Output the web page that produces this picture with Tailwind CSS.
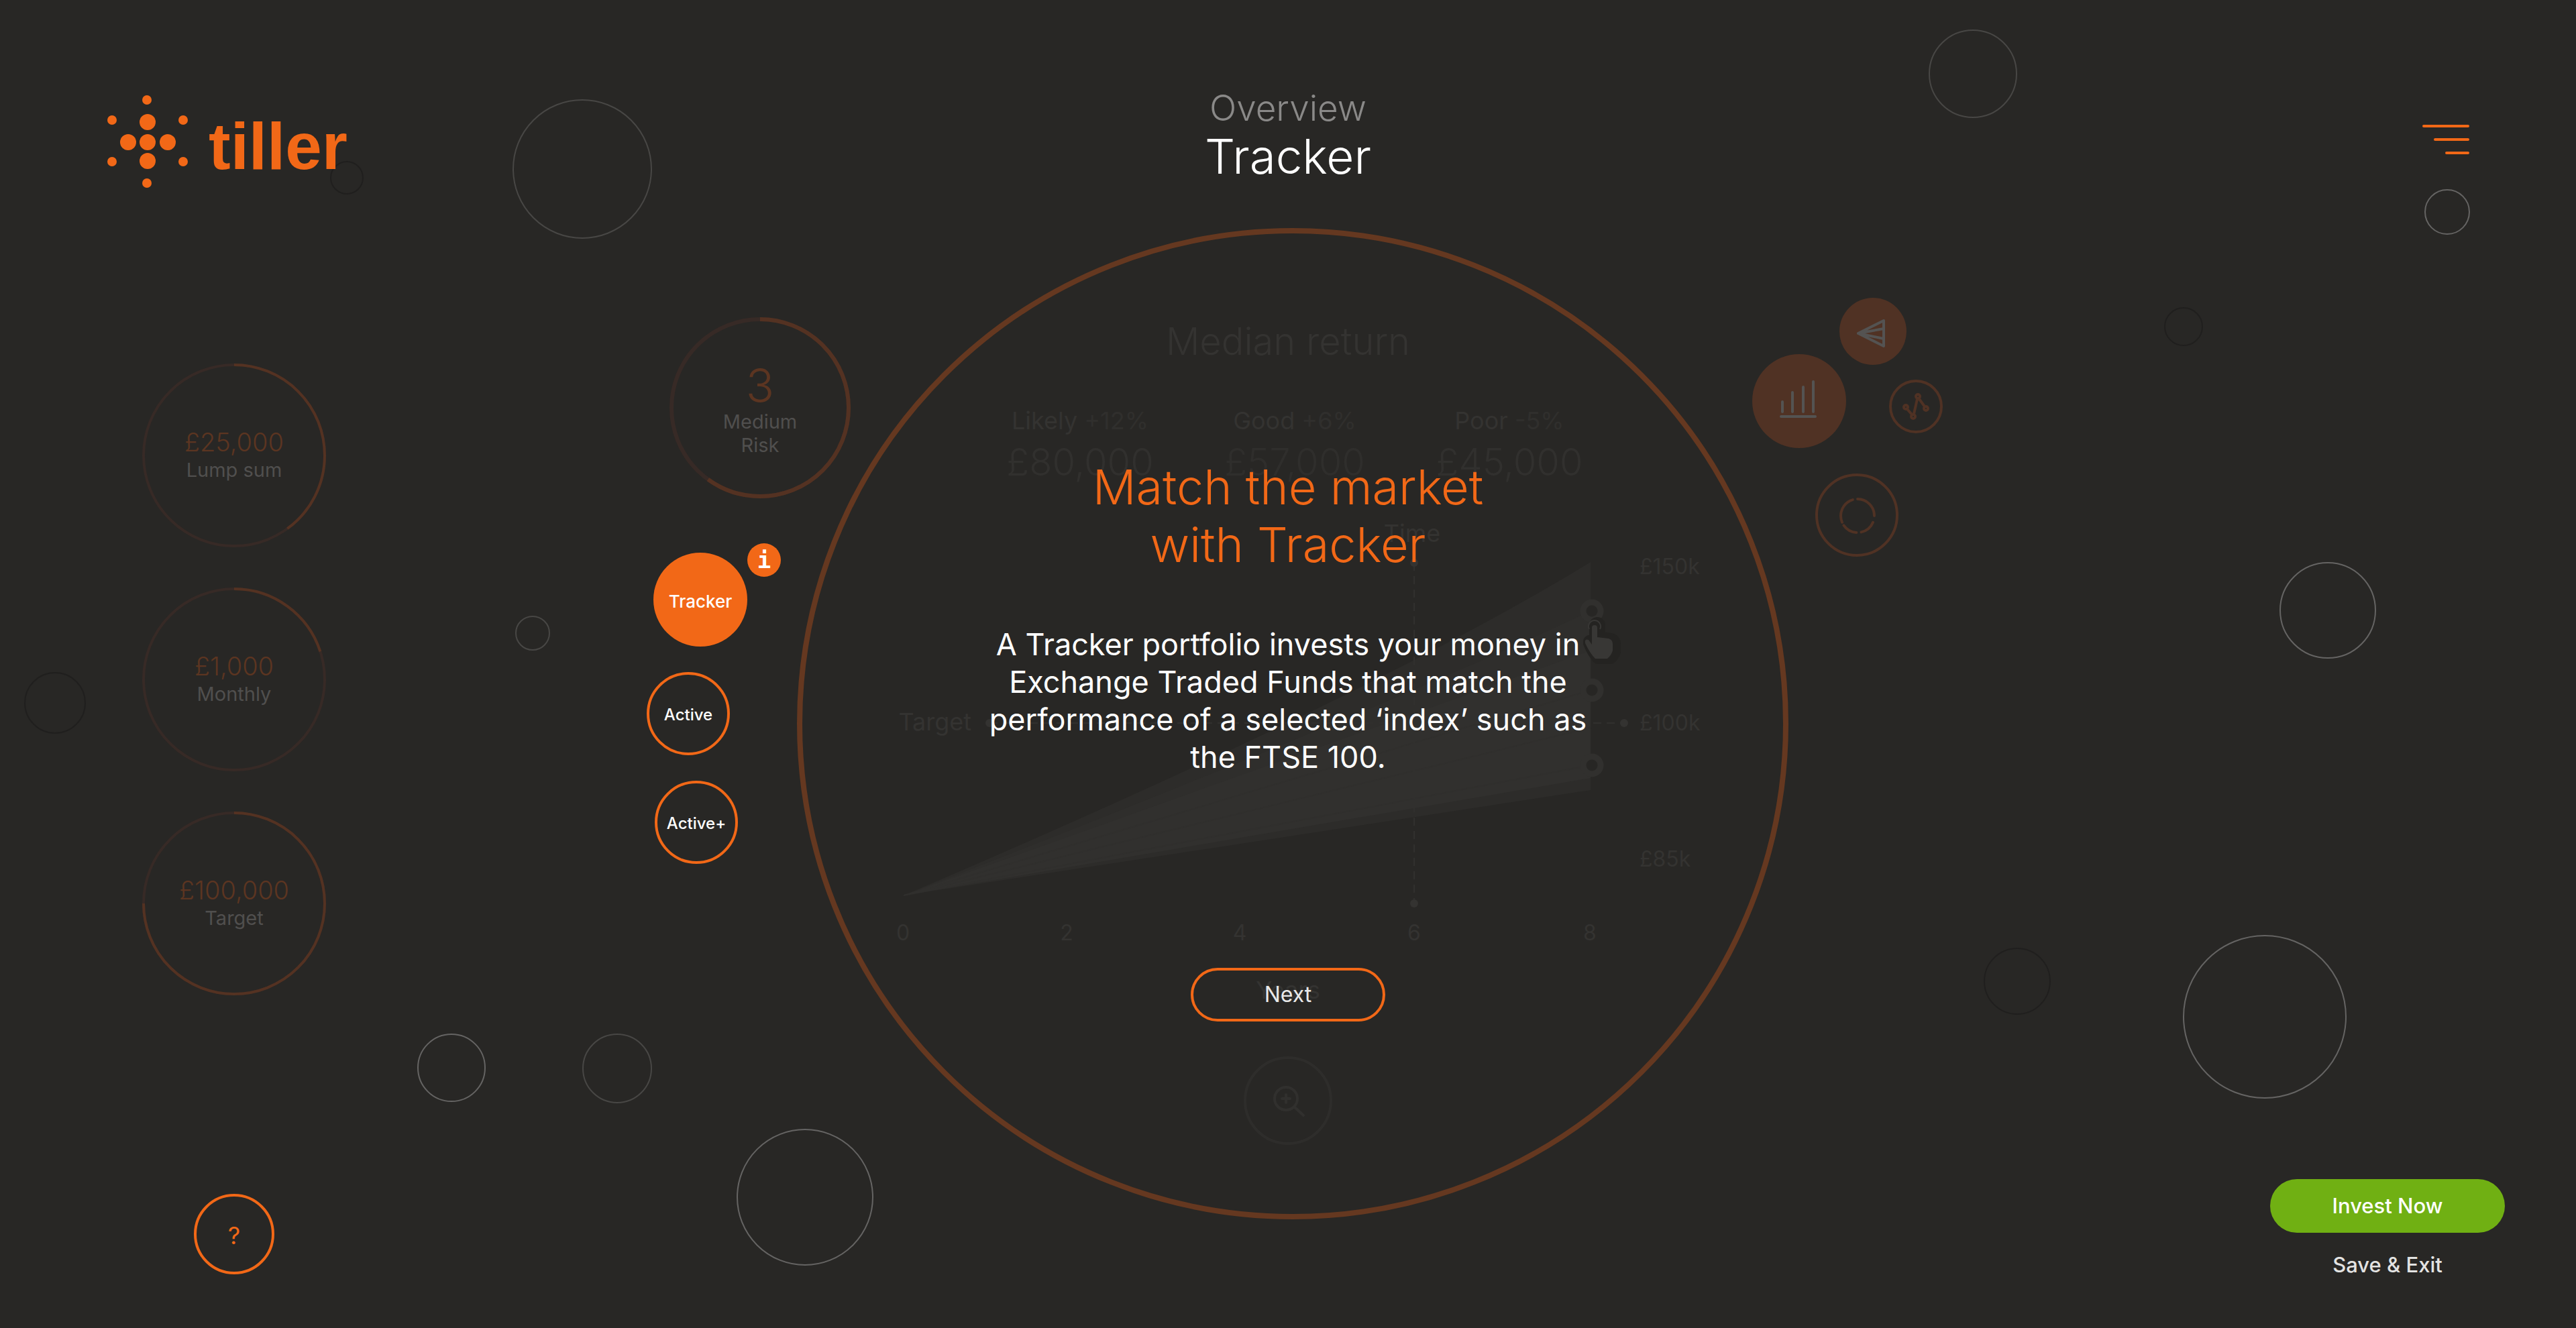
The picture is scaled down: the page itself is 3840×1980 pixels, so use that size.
<!DOCTYPE html>
<html lang="en">
<head>
<meta charset="utf-8">
<meta name="viewport" content="width=device-width, initial-scale=1">
<title>Tiller – Tracker overview</title>
<script src="https://cdn.jsdelivr.net/npm/@tailwindcss/browser@4"></script>
</head>
<body class="relative flex min-h-screen flex-col overflow-x-hidden bg-[#282725] font-['Inter',sans-serif] text-white">

<!-- Floating background bubbles -->
<svg class="pointer-events-none absolute inset-0 h-full w-full" viewBox="0 0 3840 1980" preserveAspectRatio="xMidYMid slice" fill="none" stroke-width="2" aria-hidden="true">
  <g stroke="#484745">
    <circle cx="868" cy="252" r="103"/>
    <circle cx="2941" cy="110" r="65"/>
    <circle cx="920" cy="1593" r="51"/>
    <circle cx="794" cy="944" r="25"/>
  </g>
  <g stroke="#656463">
    <circle cx="3648" cy="316" r="33"/>
    <circle cx="3470" cy="910" r="71"/>
    <circle cx="3376" cy="1516" r="121"/>
    <circle cx="1200" cy="1785" r="101"/>
    <circle cx="673" cy="1592" r="50"/>
  </g>
  <g stroke="#201f1e">
    <circle cx="517" cy="265" r="24"/>
    <circle cx="3255" cy="487" r="28"/>
    <circle cx="3007" cy="1463" r="49"/>
    <circle cx="82" cy="1048" r="45"/>
  </g>
</svg>

<header class="relative grid grid-cols-3 items-start px-[159px] pt-[129px]">
  <a href="#" class="mt-[13px] justify-self-start" aria-label="tiller home">
    <svg class="h-[139px] w-[380px]" viewBox="0 0 380 139" fill="#f26817">
      <circle cx="60" cy="7" r="7"/><circle cx="60" cy="131" r="7"/>
      <circle cx="8" cy="37" r="7"/><circle cx="114" cy="37" r="7"/>
      <circle cx="8" cy="99" r="7"/><circle cx="114" cy="99" r="7"/>
      <circle cx="61" cy="40" r="12"/><circle cx="61" cy="70" r="12"/><circle cx="61" cy="98" r="12"/>
      <circle cx="32" cy="70" r="12"/><circle cx="91" cy="70" r="12"/>
      <text x="152" y="110" class="font-['Liberation_Sans',sans-serif] text-[98px] font-bold">tiller</text>
    </svg>
  </a>
  <div class="text-center">
    <p class="text-[53px] font-light leading-16 text-[#8a8988]">Overview</p>
    <h1 class="text-[71px] font-light leading-20">Tracker</h1>
  </div>
  <button type="button" class="mt-[57px] flex w-[70px] flex-col items-end gap-4 justify-self-end" aria-label="Menu">
    <span class="h-1 w-full rounded-full bg-[#f26817]"></span>
    <span class="h-1 w-[53px] rounded-full bg-[#f26817]"></span>
    <span class="h-1 w-[36px] rounded-full bg-[#f26817]"></span>
  </button>
</header>

<main class="relative grid flex-1 grid-cols-[1fr_auto_1fr] pl-[14px] pt-[59px]">

  <div class="flex justify-between">
    <!-- Investment inputs -->
    <aside class="flex flex-col items-center justify-between gap-10 pb-20 pl-[198px] pt-[202px]">
      <div class="flex flex-col gap-[60px]">
        <div class="grid size-[274px] place-items-center text-center">
          <svg class="size-[274px] -rotate-90 [grid-area:1/1]" viewBox="0 0 274 274" fill="none" stroke-width="4" aria-hidden="true">
            <circle cx="137" cy="137" r="135" stroke="#372a26"/>
            <circle cx="137" cy="137" r="135" stroke="#543222" pathLength="100" stroke-dasharray="40 100"/>
          </svg>
          <div class="[grid-area:1/1]">
            <p class="text-[38px] font-light leading-11 text-[#5c3521]">£25,000</p>
            <p class="text-[29px] leading-10 text-[#504f4e]">Lump sum</p>
          </div>
        </div>
        <div class="grid size-[274px] place-items-center text-center">
          <svg class="size-[274px] -rotate-90 [grid-area:1/1]" viewBox="0 0 274 274" fill="none" stroke-width="4" aria-hidden="true">
            <circle cx="137" cy="137" r="135" stroke="#372a26"/>
            <circle cx="137" cy="137" r="135" stroke="#543222" pathLength="100" stroke-dasharray="20 100"/>
          </svg>
          <div class="[grid-area:1/1]">
            <p class="text-[38px] font-light leading-11 text-[#5c3521]">£1,000</p>
            <p class="text-[29px] leading-10 text-[#504f4e]">Monthly</p>
          </div>
        </div>
        <div class="grid size-[274px] place-items-center text-center">
          <svg class="size-[274px] -rotate-90 [grid-area:1/1]" viewBox="0 0 274 274" fill="none" stroke-width="4" aria-hidden="true">
            <circle cx="137" cy="137" r="135" stroke="#372a26"/>
            <circle cx="137" cy="137" r="135" stroke="#543222" pathLength="100" stroke-dasharray="75 100"/>
          </svg>
          <div class="[grid-area:1/1]">
            <p class="text-[38px] font-light leading-11 text-[#5c3521]">£100,000</p>
            <p class="text-[29px] leading-10 text-[#504f4e]">Target</p>
          </div>
        </div>
      </div>
      <button type="button" class="size-[120px] rounded-full border-4 border-[#f26817] pt-1 text-[36px] text-[#f26817]" aria-label="Help">?</button>
    </aside>

    <!-- Risk level and portfolio choice -->
    <div class="-mr-20 flex w-[304px] flex-col items-start pt-[133px]">
      <div class="grid size-[270px] place-items-center self-end text-center">
        <svg class="size-[270px] -rotate-90 [grid-area:1/1]" viewBox="0 0 270 270" fill="none" stroke-width="6" aria-hidden="true">
          <circle cx="135" cy="135" r="132" stroke="#372a26"/>
          <circle cx="135" cy="135" r="132" stroke="#543222" pathLength="100" stroke-dasharray="60 100"/>
        </svg>
        <div class="pt-1 [grid-area:1/1]">
          <p class="text-[70px] font-light leading-18 text-[#5c3521]">3</p>
          <p class="text-[29px] leading-[35px] text-[#504f4e]">Medium<br>Risk</p>
        </div>
      </div>
      <div class="ml-[10px] mt-[67px] flex items-start">
        <button type="button" class="mt-[14px] size-[140px] rounded-full bg-[#f26817] pt-1 text-[26px] font-medium">Tracker</button>
        <button type="button" class="size-[50px] rounded-full bg-[#f26817] font-['DejaVu_Sans_Mono',monospace] text-[34px] font-bold leading-[50px]" aria-label="About Tracker">i</button>
      </div>
      <button type="button" class="mt-[38px] size-[124px] rounded-full border-4 border-[#f26817] pt-1 text-[24px] font-medium">Active</button>
      <button type="button" class="ml-[12px] mt-[38px] size-[124px] rounded-full border-4 border-[#f26817] pt-1 text-[24px] font-medium">Active+</button>
    </div>
  </div>

  <!-- Main dial -->
  <section class="grid size-[1478px] rounded-full border-8 border-[#653820] pr-[14px] text-center">
    <div class="flex flex-col items-center pt-[127px] text-[#343331] [grid-area:1/1]">
      <h2 class="text-[56px] font-light leading-17">Median return</h2>
      <dl class="mt-[62px] grid w-[980px] grid-cols-3 pl-5">
        <div>
          <dt class="text-[36px] leading-11">Likely <span class="text-[#302f2d]">+12%</span></dt>
          <dd class="mt-3 text-[56px] font-light leading-14 text-[#31302e]">£80,000</dd>
        </div>
        <div>
          <dt class="text-[36px] leading-11">Good <span class="text-[#302f2d]">+6%</span></dt>
          <dd class="mt-3 text-[56px] font-light leading-14 text-[#2f2e2c]">£57,000</dd>
        </div>
        <div>
          <dt class="text-[36px] leading-11">Poor <span class="text-[#302f2d]">-5%</span></dt>
          <dd class="mt-3 text-[56px] font-light leading-14 text-[#31302e]">£45,000</dd>
        </div>
      </dl>
      <svg class="mt-[43px] h-[660px] w-full text-[32px]" viewBox="0 0 1448 660" fill="#343331">
        <path fill="#2d2c2a" d="M151 575Q854 275 1175 78V418Z"/>
        <path fill="#2f2e2c" d="M151 575Q860 300 1175 151V381L151 575Z"/>
        <path fill="#31302e" d="M151 575L1175 210V400Z"/>
        <path stroke="#302f2d" stroke-width="2" fill="none" d="M151 575L1175 269M151 575L1175 325M151 575L1175 381"/>
        <path stroke="#31302e" stroke-width="2" stroke-dasharray="12 8" fill="none" d="M912 79V587M279 318H1225"/>
        <circle cx="912" cy="79" r="6"/><circle cx="912" cy="587" r="6"/>
        <circle cx="279" cy="318" r="6"/><circle cx="1225" cy="318" r="6"/>
        <g fill="#272624" stroke="#31302e" stroke-width="9">
          <circle cx="1177" cy="151" r="13"/><circle cx="1177" cy="269" r="13"/><circle cx="1177" cy="381" r="13"/>
        </g>
        <!-- Tap gesture -->
        <g stroke="#242321" stroke-width="16" stroke-linejoin="round" fill="#242321">
          <path d="M1181 172a4 4 0 0 1 8 0V190L1206 192Q1212 194 1212 200V212Q1210 218 1205 222H1186Q1178 214 1172 199Q1171 194 1176 195L1181 201Z"/>
        </g>
        <path fill="#383735" d="M1177 176a4 4 0 0 1 8 0V190L1202 192Q1208 194 1208 200V210Q1206 217 1200 222H1182Q1174 214 1167 199Q1166 192 1172 194L1177 201Z"/>
        <path stroke="#383735" stroke-width="2" fill="none" d="M1173 178a9 9 0 1 1 16 0"/>
        <text x="909" y="48" text-anchor="middle" class="text-[36px]">Time</text>
        <text x="252" y="329" text-anchor="end" class="text-[36px]">Target</text>
        <text x="1248" y="96">£150k</text>
        <text x="1248" y="329">£100k</text>
        <text x="1248" y="532">£85k</text>
        <g text-anchor="middle">
          <text x="150" y="642">0</text><text x="394" y="642">2</text><text x="652" y="642">4</text><text x="912" y="642">6</text><text x="1174" y="642">8</text>
        </g>
      </svg>
      <p class="mt-[34px] text-[36px] leading-11">Years</p>
      <button type="button" class="mt-[77px] grid size-[132px] place-items-center rounded-full border-4 border-[#2e2d2b]" aria-label="Zoom in">
        <svg class="size-[60px]" viewBox="0 0 60 60" fill="none" stroke="#31302e" stroke-width="4" stroke-linecap="round">
          <circle cx="27" cy="27" r="17"/><path d="M39 39L53 52M27 21V33M21 27H33"/>
        </svg>
      </button>
    </div>

    <!-- Portfolio explanation over the chart -->
    <div class="relative flex flex-col items-center pt-[335px] [grid-area:1/1]">
      <h2 class="max-w-[700px] text-[72px] font-light leading-[86px] text-[#f26817]">Match the market with Tracker</h2>
      <p class="mt-[78px] max-w-[920px] text-[45px] leading-14">A Tracker portfolio invests your money in Exchange Traded Funds that match the performance of a selected ‘index’ such as the FTSE 100.</p>
      <button type="button" class="mt-[286px] h-20 w-[290px] rounded-full border-4 border-[#f26817] text-[32px] text-[#e9e9e9]">Next</button>
    </div>
  </section>

  <div class="flex justify-between">
    <!-- Chart views -->
    <nav class="-ml-[54px] pt-[104px]" aria-label="Chart views">
      <div class="flex items-start">
        <button type="button" class="mt-[84px] size-[140px] rounded-full bg-[#503224]" aria-label="Bar chart">
          <svg viewBox="0 0 140 140" fill="none" stroke="#545352" stroke-width="4" stroke-linecap="round"><path d="M45 71V86M60 57V86M76 49V86M91 41V86M43 93H94"/></svg>
        </button>
        <button type="button" class="-ml-[10px] size-[100px] rounded-full bg-[#503224]" aria-label="Projection">
          <svg viewBox="0 0 100 100" fill="none" stroke="#545352" stroke-width="4" stroke-linecap="round" stroke-linejoin="round"><path d="M28 53L66 34V72ZM28 53L66 46M28 53L66 61"/></svg>
        </button>
        <button type="button" class="-ml-[26px] mt-[122px] size-20 rounded-full border-4 border-[#503224]" aria-label="Line chart">
          <svg viewBox="4 4 72 72" fill="none" stroke="#503224" stroke-width="4"><path d="M27 44L34 52M37 51L42 29M45 29L53 40"/><circle cx="25" cy="41" r="3"/><circle cx="36" cy="55" r="3"/><circle cx="43" cy="25" r="3"/><circle cx="55" cy="43" r="3"/></svg>
        </button>
      </div>
      <button type="button" class="ml-[94px] mt-[38px] size-[124px] rounded-full border-4 border-[#503224]" aria-label="Allocation">
        <svg class="-rotate-90" viewBox="4 4 116 116" fill="none" stroke="#503224" stroke-width="4" stroke-linecap="round"><circle cx="61" cy="63" r="25" pathLength="360" stroke-dasharray="90 23 54 17 51 12 96 17"/></svg>
      </button>
    </nav>

    <div class="mr-[106px] flex flex-col items-center justify-end self-end pb-[74px]">
      <button type="button" class="h-20 w-[350px] rounded-full bg-[#70b013] text-[31px] font-medium">Invest Now</button>
      <a href="#" class="mt-7 text-[31px] font-medium leading-10 text-[#e3e3e2]">Save &amp; Exit</a>
    </div>
  </div>
</main>
</body>
</html>
